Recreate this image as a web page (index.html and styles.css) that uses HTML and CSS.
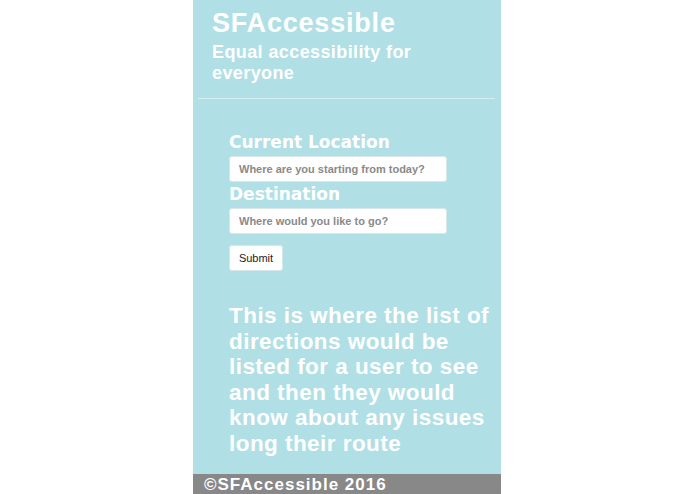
FILE: index.html
```html
<!DOCTYPE html>
<html>
<head>
<meta charset="utf-8">
<link rel="stylesheet" href="styles.css">
</head>
<body>
<div class="page">
  <header class="header">
    <h1 class="title">SFAccessible</h1>
    <h2 class="subtitle">Equal accessibility for everyone</h2>
  </header>
  <hr class="rule">
  <form class="form">
    <label class="label">Current Location</label>
    <input class="field" type="text" placeholder="Where are you starting from today?">
    <label class="label">Destination</label>
    <input class="field" type="text" placeholder="Where would you like to go?">
    <button class="submit" type="button">Submit</button>
  </form>
  <p class="directions">This is where the list of directions would be listed for a user to see and then they would know about any issues long their route</p>
  <footer class="footer">©SFAccessible 2016</footer>
</div>
</body>
</html>
```

FILE: styles.css
```css
html, body {
  margin: 0;
  padding: 0;
  background: #ffffff;
}
body {
  padding-right: 1px;
}
.page {
  width: 308px;
  height: 494px;
  margin: 0 auto;
  background: #b0dfe5;
  display: flex;
  flex-direction: column;
  font-family: "Liberation Sans", Arial, sans-serif;
  color: #ffffff;
}
.header {
  padding: 6px 0 0 19px;
}
.title {
  margin: 0;
  font-size: 27px;
  letter-spacing: 0.8px;
  line-height: 34px;
  font-weight: bold;
}
.subtitle {
  margin: 2px 0 0 0;
  font-size: 18px;
  letter-spacing: 0.4px;
  line-height: 21px;
  font-weight: bold;
  width: 230px;
}
.rule {
  margin: 14px 6px 0 5px;
  border: 0;
  height: 1px;
  background: #d4eef1;
}
.form {
  display: flex;
  flex-direction: column;
  align-items: flex-start;
  padding: 32px 0 0 36px;
}
.label {
  font-family: "DejaVu Sans", Verdana, sans-serif;
  font-weight: bold;
  font-size: 17px;
  line-height: 22px;
  margin-bottom: 3px;
}
.field {
  box-sizing: border-box;
  width: 218px;
  height: 26px;
  border: 1px solid #d8e8ea;
  border-radius: 3px;
  background: #ffffff;
  padding: 0 9px;
  font-family: "Liberation Sans", Arial, sans-serif;
  font-weight: bold;
  font-size: 11px;
  margin-bottom: 1px;
}
.field::placeholder {
  color: #8a8a8a;
}
.submit {
  margin-top: 10px;
  box-sizing: border-box;
  width: 54px;
  height: 26px;
  border: 1px solid #d8e8ea;
  border-radius: 3px;
  background: #ffffff;
  font-family: "Liberation Sans", Arial, sans-serif;
  font-size: 11px;
  color: #222222;
  padding: 0;
}
.directions {
  margin: 32px 6px 0 36px;
  font-size: 22.5px;
  letter-spacing: 0.45px;
  line-height: 25.6px;
  font-weight: bold;
  flex: 1;
}
.footer {
  height: 20px;
  background: #888888;
  font-size: 17px;
  letter-spacing: 1px;
  line-height: 22px;
  font-weight: bold;
  padding-left: 11px;
  white-space: nowrap;
}
```
